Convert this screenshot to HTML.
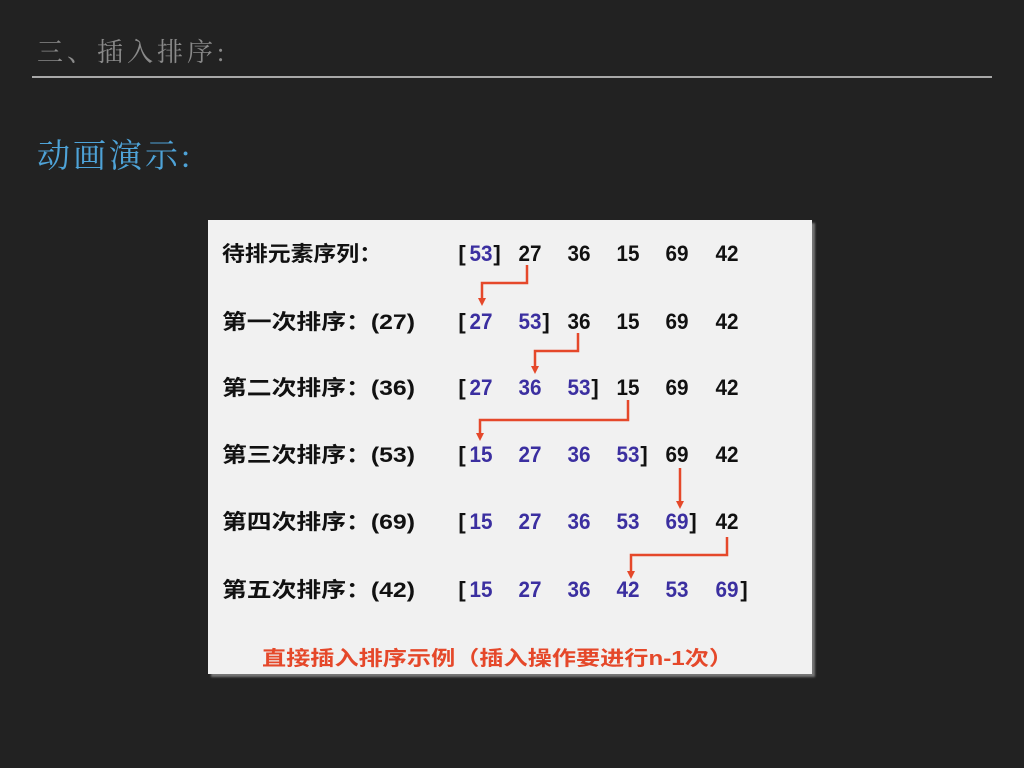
<!DOCTYPE html>
<html><head><meta charset="utf-8"><style>
html,body{margin:0;padding:0;background:#222222;width:1024px;height:768px;overflow:hidden}
.t{position:absolute;font-family:"Liberation Serif","Noto Serif CJK SC",serif}
</style></head><body>
<div class="t" style="left:37px;top:32px;font-size:26px;color:#8a8a8a;letter-spacing:4px">三、插入排序:</div>
<div style="position:absolute;left:32px;top:76px;width:960px;height:2px;background:#a8a8a8"></div>
<div class="t" style="left:37px;top:130px;font-size:33px;color:#4ea3d8;letter-spacing:3px">动画演示:</div>
<div style="position:absolute;left:208px;top:220px;width:604px;height:454px;background:#f1f1f1;box-shadow:3px 3px 2px #777"></div>
<svg width="1024" height="768" style="position:absolute;left:0;top:0" font-family="'Liberation Sans','Noto Sans CJK SC',sans-serif" font-weight="bold" font-size="22">
<g fill="#111" font-size="21">
<text x="222" y="261" textLength="160" lengthAdjust="spacingAndGlyphs">待排元素序列：</text>
<text x="222" y="329" textLength="193" lengthAdjust="spacingAndGlyphs">第一次排序：(27)</text>
<text x="222" y="395" textLength="193" lengthAdjust="spacingAndGlyphs">第二次排序：(36)</text>
<text x="222" y="462" textLength="193" lengthAdjust="spacingAndGlyphs">第三次排序：(53)</text>
<text x="222" y="529" textLength="193" lengthAdjust="spacingAndGlyphs">第四次排序：(69)</text>
<text x="222" y="597" textLength="193" lengthAdjust="spacingAndGlyphs">第五次排序：(42)</text>
</g>
<g text-anchor="middle">
<text x="462" y="261" fill="#111">[</text><text x="481" y="261" fill="#3b2fa0" textLength="23" lengthAdjust="spacingAndGlyphs">53</text><text x="497" y="261" fill="#111">]</text>
<text x="530" y="261" fill="#111" textLength="23" lengthAdjust="spacingAndGlyphs">27</text><text x="579" y="261" fill="#111" textLength="23" lengthAdjust="spacingAndGlyphs">36</text><text x="628" y="261" fill="#111" textLength="23" lengthAdjust="spacingAndGlyphs">15</text><text x="677" y="261" fill="#111" textLength="23" lengthAdjust="spacingAndGlyphs">69</text><text x="727" y="261" fill="#111" textLength="23" lengthAdjust="spacingAndGlyphs">42</text>

<text x="462" y="329" fill="#111">[</text><text x="481" y="329" fill="#3b2fa0" textLength="23" lengthAdjust="spacingAndGlyphs">27</text><text x="530" y="329" fill="#3b2fa0" textLength="23" lengthAdjust="spacingAndGlyphs">53</text><text x="546" y="329" fill="#111">]</text>
<text x="579" y="329" fill="#111" textLength="23" lengthAdjust="spacingAndGlyphs">36</text><text x="628" y="329" fill="#111" textLength="23" lengthAdjust="spacingAndGlyphs">15</text><text x="677" y="329" fill="#111" textLength="23" lengthAdjust="spacingAndGlyphs">69</text><text x="727" y="329" fill="#111" textLength="23" lengthAdjust="spacingAndGlyphs">42</text>

<text x="462" y="395" fill="#111">[</text><text x="481" y="395" fill="#3b2fa0" textLength="23" lengthAdjust="spacingAndGlyphs">27</text><text x="530" y="395" fill="#3b2fa0" textLength="23" lengthAdjust="spacingAndGlyphs">36</text><text x="579" y="395" fill="#3b2fa0" textLength="23" lengthAdjust="spacingAndGlyphs">53</text><text x="595" y="395" fill="#111">]</text>
<text x="628" y="395" fill="#111" textLength="23" lengthAdjust="spacingAndGlyphs">15</text><text x="677" y="395" fill="#111" textLength="23" lengthAdjust="spacingAndGlyphs">69</text><text x="727" y="395" fill="#111" textLength="23" lengthAdjust="spacingAndGlyphs">42</text>

<text x="462" y="462" fill="#111">[</text><text x="481" y="462" fill="#3b2fa0" textLength="23" lengthAdjust="spacingAndGlyphs">15</text><text x="530" y="462" fill="#3b2fa0" textLength="23" lengthAdjust="spacingAndGlyphs">27</text><text x="579" y="462" fill="#3b2fa0" textLength="23" lengthAdjust="spacingAndGlyphs">36</text><text x="628" y="462" fill="#3b2fa0" textLength="23" lengthAdjust="spacingAndGlyphs">53</text><text x="644" y="462" fill="#111">]</text>
<text x="677" y="462" fill="#111" textLength="23" lengthAdjust="spacingAndGlyphs">69</text><text x="727" y="462" fill="#111" textLength="23" lengthAdjust="spacingAndGlyphs">42</text>

<text x="462" y="529" fill="#111">[</text><text x="481" y="529" fill="#3b2fa0" textLength="23" lengthAdjust="spacingAndGlyphs">15</text><text x="530" y="529" fill="#3b2fa0" textLength="23" lengthAdjust="spacingAndGlyphs">27</text><text x="579" y="529" fill="#3b2fa0" textLength="23" lengthAdjust="spacingAndGlyphs">36</text><text x="628" y="529" fill="#3b2fa0" textLength="23" lengthAdjust="spacingAndGlyphs">53</text><text x="677" y="529" fill="#3b2fa0" textLength="23" lengthAdjust="spacingAndGlyphs">69</text><text x="693" y="529" fill="#111">]</text>
<text x="727" y="529" fill="#111" textLength="23" lengthAdjust="spacingAndGlyphs">42</text>

<text x="462" y="597" fill="#111">[</text><text x="481" y="597" fill="#3b2fa0" textLength="23" lengthAdjust="spacingAndGlyphs">15</text><text x="530" y="597" fill="#3b2fa0" textLength="23" lengthAdjust="spacingAndGlyphs">27</text><text x="579" y="597" fill="#3b2fa0" textLength="23" lengthAdjust="spacingAndGlyphs">36</text><text x="628" y="597" fill="#3b2fa0" textLength="23" lengthAdjust="spacingAndGlyphs">42</text><text x="677" y="597" fill="#3b2fa0" textLength="23" lengthAdjust="spacingAndGlyphs">53</text><text x="727" y="597" fill="#3b2fa0" textLength="23" lengthAdjust="spacingAndGlyphs">69</text><text x="744" y="597" fill="#111">]</text>
</g>
<g stroke="#e5482a" stroke-width="2.5" fill="none">
<path d="M527,265 V283 H482 V300"/>
<path d="M578,333 V351 H535 V368"/>
<path d="M628,400 V420 H480 V435"/>
<path d="M680,468 V503"/>
<path d="M727,537 V555 H631 V573"/>
</g>
<g fill="#e5482a">
<path d="M478,298 L486,298 L482,306 Z"/>
<path d="M531,366 L539,366 L535,374 Z"/>
<path d="M476,433 L484,433 L480,441 Z"/>
<path d="M676,501 L684,501 L680,509 Z"/>
<path d="M627,571 L635,571 L631,579 Z"/>
</g>
<text x="262" y="665" fill="#e5482a" font-size="20" textLength="471" lengthAdjust="spacingAndGlyphs">直接插入排序示例（插入操作要进行n-1次）</text>
</svg>
</body></html>
